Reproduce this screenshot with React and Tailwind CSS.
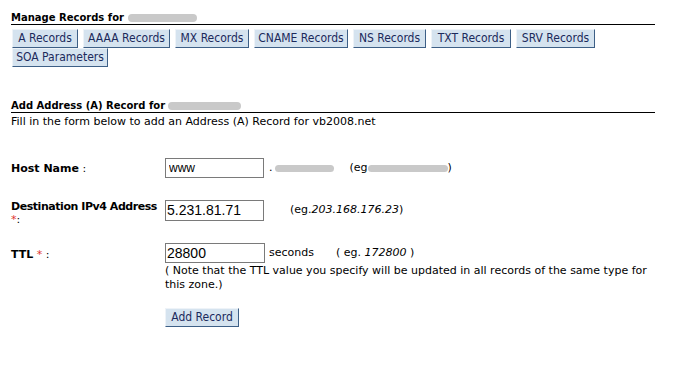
import React from "react";

const recordTabs = [
  { label: "A Records", w: "w-[66px]" },
  { label: "AAAA Records", w: "w-[87px]" },
  { label: "MX Records", w: "w-[74px]" },
  { label: "CNAME Records", w: "w-[94px]" },
  { label: "NS Records", w: "w-[73px]" },
  { label: "TXT Records", w: "w-[80px]" },
  { label: "SRV Records", w: "w-[79px]" },
  { label: "SOA Parameters", w: "w-[96px]" },
];

// blurred-out domain names in the screenshot
function Blur({ className }) {
  return <span className={`inline-block rounded-full bg-[#c9c9c9] ${className}`} />;
}

function TabButton({ label, w }) {
  return (
    <button
      className={`${w} h-[19px] border border-t-[#eef3f8] border-l-[#eef3f8] border-r-[#3d5f86] border-b-[#3d5f86] bg-[#d5e3ef] text-[12px] leading-[17px] text-[#1b2a5c] font-['DejaVu_Sans_Condensed','DejaVu_Sans',sans-serif]`}
    >
      {label}
    </button>
  );
}

export default function App() {
  return (
    <div className="h-[378px] w-[676px] bg-white pl-[11px] pt-[12px] text-[11px] text-black font-['DejaVu_Sans',Verdana,sans-serif]">
      {/* Manage Records */}
      <div className="w-[644px] border-b border-black pb-[1px] text-[10px] font-bold leading-[11px] flex items-center">
        Manage Records for <Blur className="ml-[4px] w-[69px] h-[8px]" />
      </div>
      <div className="mt-[4px] flex flex-wrap gap-x-[5px] pl-[1px] w-[600px]">
        {recordTabs.map((t) => (
          <TabButton key={t.label} {...t} />
        ))}
      </div>

      {/* Add Address heading */}
      <div className="mt-[33px] w-[644px] border-b border-black pb-[1px] text-[10px] font-bold leading-[11px] flex items-center">
        Add Address (A) Record for <Blur className="ml-[3px] w-[73px] h-[8px]" />
      </div>
      <p className="mt-[3px] leading-[12px]">
        Fill in the form below to add an Address (A) Record for vb2008.net
      </p>

      {/* Form */}
      <div className="mt-[30px] grid grid-cols-[154px_1fr] gap-y-[22px]">
        <div className="pt-[3px]">
          <span className="font-bold">Host Name</span> :
        </div>
        <div className="flex items-center h-[20px]">
          <input
            defaultValue="www"
            className="w-[99px] h-[20px] border border-[#7a7a7a] px-[3px] text-[12px] font-['Liberation_Sans',Arial,sans-serif] outline-none"
          />
          <span className="ml-[5px] flex items-center">
            .<Blur className="ml-[2px] w-[59px] h-[7px]" />
          </span>
          <span className="ml-[16px] flex items-center">
            (eg<Blur className="w-[80px] h-[7px]" />)
          </span>
        </div>

        <div className="h-[21px] leading-[13px] whitespace-nowrap">
          <span className="font-bold tracking-[-0.45px]">Destination IPv4 Address</span>
          <br />
          <span className="text-[#e0322e]">*</span>:
        </div>
        <div className="flex items-center h-[21px]">
          <input
            defaultValue="5.231.81.71"
            className="w-[99px] h-[21px] border border-[#7a7a7a] px-[1px] text-[14px] font-['Liberation_Sans',Arial,sans-serif] outline-none"
          />
          <span className="ml-[26px]">
            (eg.<i>203.168.176.23</i>)
          </span>
        </div>

        <div className="pt-[4px]">
          <span className="font-bold">TTL</span> <span className="text-[#e0322e]">*</span> :
        </div>
        <div>
          <div className="flex items-center h-[20px]">
            <input
              defaultValue="28800"
              className="w-[100px] h-[20px] border border-[#7a7a7a] px-[1px] text-[14px] font-['Liberation_Sans',Arial,sans-serif] outline-none"
            />
            <span className="ml-[4px]">seconds</span>
            <span className="ml-[22px]">
              ( eg. <i>172800</i> )
            </span>
          </div>
          <p className="w-[490px] leading-[14px] mt-[1px]">
            ( Note that the TTL value you specify will be updated in all records of the same type for
            this zone.)
          </p>
          <button className="mt-[16px] w-[74px] h-[19px] border border-t-[#eef3f8] border-l-[#eef3f8] border-r-[#3d5f86] border-b-[#3d5f86] bg-[#d5e3ef] text-[12px] leading-[17px] text-[#1b2a5c] font-['DejaVu_Sans_Condensed','DejaVu_Sans',sans-serif]">
            Add Record
          </button>
        </div>
      </div>
    </div>
  );
}
